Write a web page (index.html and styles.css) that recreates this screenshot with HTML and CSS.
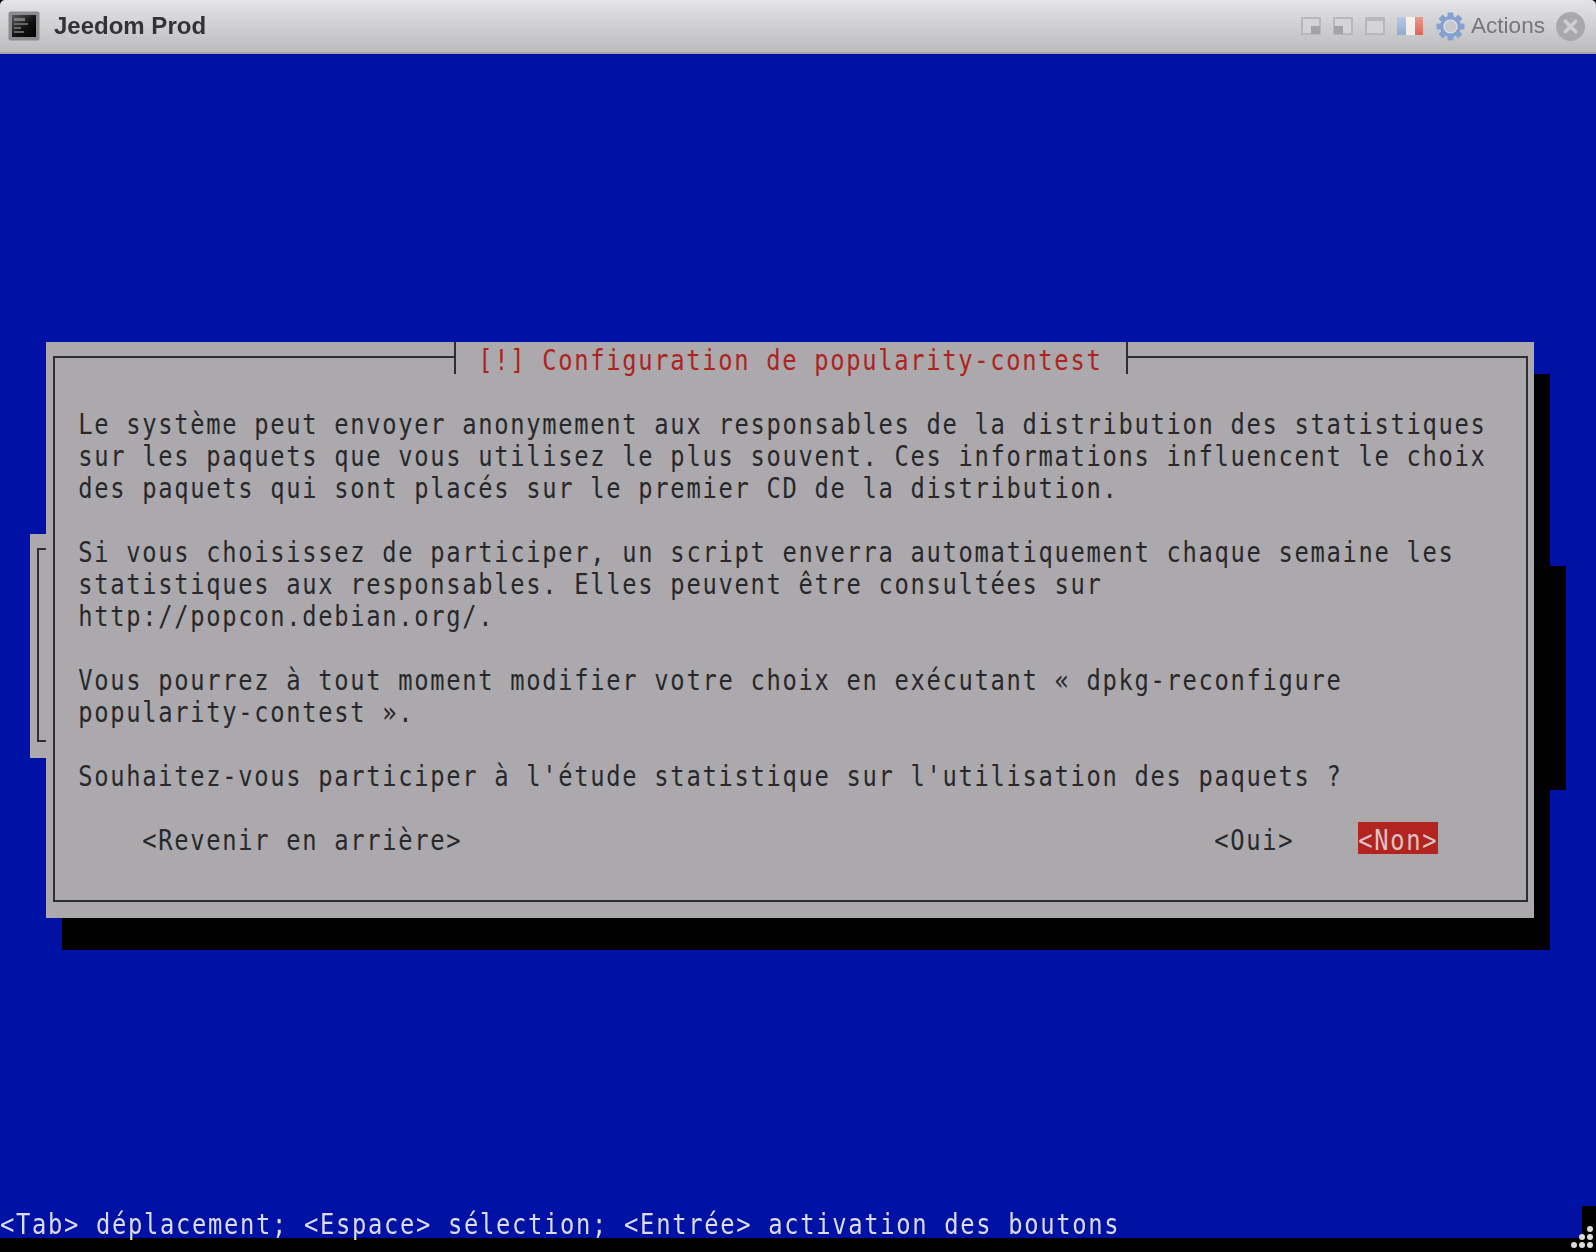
FILE: index.html
```html
<!DOCTYPE html>
<html lang="fr">
<head>
<meta charset="utf-8">
<title>Jeedom Prod</title>
<link rel="stylesheet" href="styles.css">
</head>
<body>
<div class="shell">
  <header class="titlebar">
    <svg class="app-icon" width="32" height="30" viewBox="0 0 32 30">
      <defs>
        <linearGradient id="scr" x1="0" y1="0" x2="1" y2="1"><stop offset="0" stop-color="#5a5a5a"/><stop offset=".55" stop-color="#111"/><stop offset="1" stop-color="#000"/></linearGradient>
        <linearGradient id="flagfade" x1="0" y1="0" x2="0" y2="1"><stop offset="0" stop-color="#fff" stop-opacity=".35"/><stop offset="1" stop-color="#fff" stop-opacity="0"/></linearGradient>
      </defs>
      <rect x="0.5" y="0.5" width="31" height="29" rx="2" fill="#8b8b8d"/>
      <rect x="4" y="4" width="24" height="22" fill="url(#scr)"/>
      <rect x="6" y="7" width="11" height="3" fill="#7a7a7a"/>
      <rect x="6" y="12" width="14" height="2" fill="#666"/>
      <rect x="6" y="16" width="7" height="2" fill="#666"/>
      <rect x="6" y="20" width="10" height="2" fill="#666"/>
    </svg>
    <span class="app-name">Jeedom Prod</span>
    <div class="tools">
      <svg class="win-btn" width="20" height="18" viewBox="0 0 20 18"><rect x="1" y="1" width="18" height="16" fill="#d4d4d6" stroke="#b8b8ba" stroke-width="2"/><rect x="10" y="9" width="9" height="8" fill="#a4a4a6"/></svg>
      <svg class="win-btn" width="20" height="18" viewBox="0 0 20 18"><rect x="1" y="1" width="18" height="16" fill="#d4d4d6" stroke="#b8b8ba" stroke-width="2"/><rect x="1" y="9" width="9" height="8" fill="#a4a4a6"/></svg>
      <svg class="win-btn" width="20" height="18" viewBox="0 0 20 18"><rect x="1" y="1" width="18" height="16" fill="#d4d4d6" stroke="#b8b8ba" stroke-width="2"/><rect x="1" y="1" width="18" height="3" fill="#b8b8ba"/></svg>
      <svg class="flag" width="26" height="18" viewBox="0 0 26 18">
        <rect x="0" y="0" width="9" height="18" fill="#93a9d8"/><rect x="9" y="0" width="9" height="18" fill="#f0eae8"/><rect x="18" y="0" width="8" height="18" fill="#dc6456"/>
        <rect x="0" y="0" width="26" height="18" fill="url(#flagfade)"/>
      </svg>
      <svg class="gear" width="29" height="29" viewBox="0 0 29 29">
        <g fill="#84a2cf">
          <rect x="11.5" y="0.5" width="6" height="28" rx="1"/>
          <rect x="11.5" y="0.5" width="6" height="28" rx="1" transform="rotate(45 14.5 14.5)"/>
          <rect x="11.5" y="0.5" width="6" height="28" rx="1" transform="rotate(90 14.5 14.5)"/>
          <rect x="11.5" y="0.5" width="6" height="28" rx="1" transform="rotate(135 14.5 14.5)"/>
          <circle cx="14.5" cy="14.5" r="10.5"/>
        </g>
        <circle cx="14.5" cy="14.5" r="6.5" fill="#c8c8cc" stroke="#e4e4e8" stroke-width="1.2"/>
      </svg>
      <span class="actions">Actions</span>
      <svg class="close" width="29" height="29" viewBox="0 0 28 28">
        <circle cx="14" cy="14" r="14" fill="#a9a9ab"/>
        <path d="M9 9 L19 19 M19 9 L9 19" stroke="#cfcfd1" stroke-width="3.4" stroke-linecap="round"/>
      </svg>
    </div>
  </header>
  <main class="term">
    <div class="screen"></div>
    <div class="shadow back-shadow"></div>
    <section class="win back-win"><div class="frame"></div></section>
    <div class="shadow front-shadow"></div>
    <section class="win front-win">
      <div class="frame"></div>
      <h1 class="win-title"><span class="glyphs"> [!] Configuration de popularity-contest </span></h1>
      <p class="body-text glyphs">Le système peut envoyer anonymement aux responsables de la distribution des statistiques
sur les paquets que vous utilisez le plus souvent. Ces informations influencent le choix
des paquets qui sont placés sur le premier CD de la distribution.

Si vous choisissez de participer, un script enverra automatiquement chaque semaine les
statistiques aux responsables. Elles peuvent être consultées sur
http://popcon.debian.org/.

Vous pourrez à tout moment modifier votre choix en exécutant « dpkg-reconfigure
popularity-contest ».

Souhaitez-vous participer à l'étude statistique sur l'utilisation des paquets ?</p>
      <span class="btn btn-back"><span class="glyphs">&lt;Revenir en arrière&gt;</span></span>
      <span class="btn btn-yes"><span class="glyphs">&lt;Oui&gt;</span></span>
      <span class="btn btn-no"><span class="glyphs">&lt;Non&gt;</span></span>
    </section>
    <p class="status glyphs">&lt;Tab&gt; déplacement; &lt;Espace&gt; sélection; &lt;Entrée&gt; activation des boutons</p>
    <div class="corner"></div>
  </main>
  <svg class="grip" width="24" height="24" viewBox="0 0 24 24">
    <g fill="#dcdcdc">
      <circle cx="19" cy="4" r="3"/>
      <circle cx="11" cy="12" r="3"/><circle cx="19" cy="12" r="3"/>
      <circle cx="3" cy="20" r="3"/><circle cx="11" cy="20" r="3"/><circle cx="19" cy="20" r="3"/>
    </g>
  </svg>
</div>
</body>
</html>
```
FILE: styles.css
```css
* { box-sizing: border-box; }
html, body { margin: 0; padding: 0; background: #000; }
.shell {
  position: relative;
  width: 1596px;
  height: 1252px;
  overflow: hidden;
  background: #000;
}
.titlebar {
  height: 54px;
  display: flex;
  align-items: center;
  padding: 0 11px 0 8px;
  background: linear-gradient(#e4e4e8, #bcbcbe);
  border-bottom: 2px solid #a6a6a6;
  border-radius: 5px 5px 0 0;
}
.app-icon { margin-right: 14px; }
.app-name {
  font: bold 24px "Liberation Sans", Arial, sans-serif;
  color: #333336;
  filter: blur(.3px);
}
.tools {
  margin-left: auto;
  display: flex;
  align-items: center;
  filter: blur(.5px);
}
.win-btn { margin-right: 12px; }
.flag { margin-right: 13px; }
.gear { margin-right: 6px; }
.actions {
  font: 22.6px "Liberation Sans", Arial, sans-serif;
  color: #77777b;
  margin-right: 11px;
}
.term {
  display: grid;
  grid-template-columns: repeat(100, 16px);
  grid-template-rows: repeat(38, 32px);
  margin-left: -2px;
  font: 28px/32px "DejaVu Sans Mono", monospace;
  filter: blur(.45px);
}
.screen { grid-area: 1 / 1 / 38 / 101; background: #0012a6; }
.shadow { background: #000; }
.back-shadow { grid-area: 17 / 97 / 24 / 99; }
.front-shadow { grid-area: 11 / 5 / 29 / 98; }
.win {
  background: #aba9ac;
  color: #28282a;
  display: grid;
  grid-template-columns: repeat(var(--cols), 16px);
  grid-template-rows: repeat(var(--rows), 32px);
}
.back-win { --cols: 94; --rows: 7; grid-area: 16 / 3 / 23 / 97; }
.front-win { --cols: 93; --rows: 18; grid-area: 10 / 4 / 28 / 97; }
.frame {
  grid-area: 1 / 1 / -1 / -1;
  margin: 14px 6px 16px 7px;
  border: 2px solid #2e2e30;
}
.win-title {
  grid-area: 1 / 26 / 2 / 69;
  margin: 0 6px 0 8px;
  padding: 0 8px 0 6px;
  background: #aba9ac;
  border: solid #2e2e30;
  border-width: 0 2px;
  font: inherit;
  color: #ae2320;
  white-space: pre;
}
.glyphs {
  display: block;
  white-space: pre;
  letter-spacing: 1.97px;
  padding: 3px 0 0 .3px;
  transform: scaleX(.85);
  transform-origin: 0 0;
}
.body-text {
  grid-area: 3 / 3 / 15 / 92;
  margin: 0;
}
.btn { white-space: pre; }
.btn-back { grid-area: 16 / 7 / 17 / 27; }
.btn-yes { grid-area: 16 / 74 / 17 / 79; }
.btn-no { grid-area: 16 / 83 / 17 / 88; background: #b3231f; color: #d8c4c4; }
.status {
  grid-area: 37 / 1 / 38 / 100;
  margin: 0;
  padding-left: 2.35px;
  color: #dcdce8;
}
.corner { grid-area: 37 / 100 / 39 / 101; background: #000; }
.grip { position: absolute; right: 1px; bottom: 3px; }
```
